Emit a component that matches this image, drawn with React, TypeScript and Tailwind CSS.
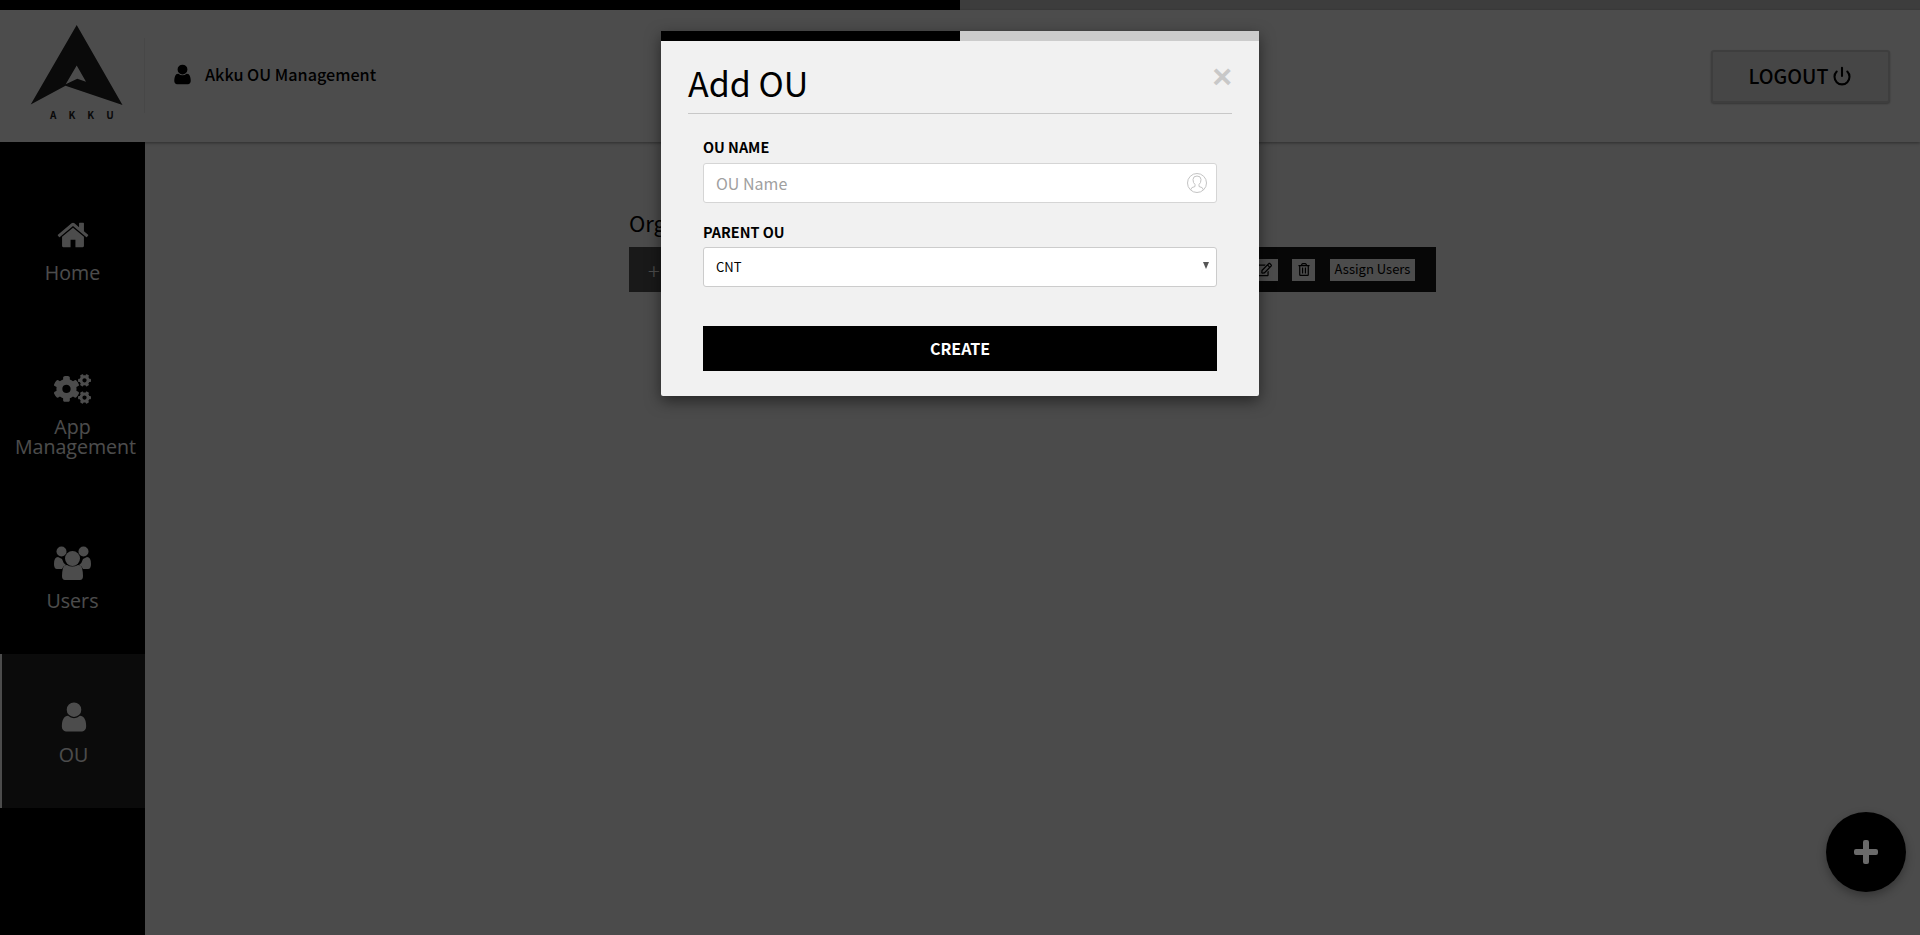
import { FaCogs, FaRegEdit, FaRegTrashAlt } from "react-icons/fa";
import { FiPower } from "react-icons/fi";

const font = { fontFamily: '"Noto Sans CJK SC", "Open Sans", sans-serif' };

const HOME = "M1472 992v480q0 26-19 45t-45 19h-384v-384h-256v384h-384q-26 0-45-19t-19-45v-480q0-1 .5-3t.5-3l575-474 575 474q1 2 1 6zm223-69l-62 74q-8 9-21 11h-3q-13 0-21-7l-692-577-692 577q-12 8-24 7-13-2-21-11l-62-74q-8-10-7-23.5t11-21.5l719-599q32-26 76-26t76 26l244 204v-195q0-14 9-23t23-9h192q14 0 23 9t9 23v408l219 182q10 8 11 21.5t-7 23.5z";
const USER = "M1536 1399q0 109-62.5 187t-150.5 78h-854q-88 0-150.5-78t-62.5-187q0-85 8.5-160.5t31.5-152 58.5-131 94-89 134.5-34.5q131 128 313 128t313-128q76 0 134.5 34.5t94 89 58.5 131 31.5 152 8.5 160.5zm-256-887q0 159-112.5 271.5t-271.5 112.5-271.5-112.5-112.5-271.5 112.5-271.5 271.5-112.5 271.5 112.5 112.5 271.5z";

function Fa4({ d, className }: { d: string; className: string }) {
  return (
    <svg viewBox="0 0 1792 1792" className={className} fill="currentColor">
      <path d={d} />
    </svg>
  );
}

function UsersIcon() {
  return (
    <svg viewBox="0 0 37 34" className="w-[37px] h-[34px]" fill="currentColor">
      <circle cx="7.5" cy="5.5" r="5" />
      <circle cx="29.5" cy="5.5" r="5" />
      <path d="M0 18q0-7 4-7l4 2q1 4 4 6-3 1-4 4H3q-3 0-3-5z" />
      <path d="M37 18q0-7-4-7l-4 2q-1 4-4 6 3 1 4 4h5q3 0 3-5z" />
      <circle cx="18.5" cy="12.5" r="7.5" />
      <path d="M9 22q1-3 4-3 5 3 11 0 3 0 4 3 1 4 1 8 0 4-3 4H11q-3 0-3-4 0-4 1-8z" />
    </svg>
  );
}

function Logo() {
  return (
    <div className="w-[145px] shrink-0 relative h-full">
      <svg viewBox="0 0 145 132" className="w-[145px] h-[132px] text-[#222]" fill="currentColor">
        <path
          fillRule="evenodd"
          d="M76.7 15 122.500 95 65.500 75.800 30.700 94.500ZM76.700 55.500 65.700 74.300 77.300 68.800 86 71.700Z"
        />
      </svg>
      <div className="absolute left-[50px] top-[97px] flex gap-[12px] text-[10px] leading-[16px] font-bold text-[#222]" style={font}>
        <span>A</span>
        <span>K</span>
        <span>K</span>
        <span>U</span>
      </div>
    </div>
  );
}

function NavItem({ icon, label, active, h }: { icon: React.ReactNode; label: React.ReactNode; active?: boolean; h: string }) {
  return (
    <div className={`${h} flex flex-col items-center pt-[44px] text-white ${active ? "bg-[#262626] border-l-2 border-white" : ""}`}>
      <div className="h-[36px] flex items-end justify-center">{icon}</div>
      <div className="mt-[11px] text-center text-[19.600px] leading-[20px]" style={{ fontFamily: '"Open Sans", sans-serif' }}>{label}</div>
    </div>
  );
}

export default function App() {
  return (
    <div className="relative w-full h-[935px] overflow-hidden bg-[#fafafa] flex flex-col" style={font}>
      <div className="h-[10px] flex shrink-0">
        <div className="w-1/2 bg-black" />
        <div className="w-1/2 bg-[#cccccc]" />
      </div>
      <header className="h-[132px] shrink-0 bg-white flex items-center shadow-[0_1px_3px_rgba(0,0,0,0.4)] relative z-10">
        <Logo />
        <div className="w-px h-[75px] bg-[#eeeeee] -ml-px mb-[2px]" />
        <div className="flex items-center ml-[28px] mb-[4px] text-black">
          <Fa4 d={USER} className="w-[23px] h-[23px] -ml-[2px]" />
          <span className="ml-[11px] text-[16.200px] font-medium leading-[24px]">Akku OU Management</span>
        </div>
        <button className="ml-auto mr-[30px] w-[179px] h-[53px] rounded-[3px] border-2 border-[#cfcfcf] bg-[#ececec] shadow-[0_1px_2px_rgba(0,0,0,0.3)] flex items-center justify-center text-black text-[19.600px] font-medium leading-none">
          LOGOUT
          <FiPower className="ml-[4px] w-[20px] h-[20px]" strokeWidth={2.5} />
        </button>
      </header>
      <div className="flex-1 flex min-h-0">
        <aside className="w-[145px] shrink-0 bg-black pt-[30px]">
          <NavItem h="h-[154px]" icon={<Fa4 d={HOME} className="w-[34px] h-[34px]" />} label="Home" />
          <NavItem h="h-[174px]" icon={<FaCogs className="w-[37px] h-[34px]" />} label={<>App<br /><span className="relative left-[3px]">Management</span></>} />
          <NavItem h="h-[154px]" icon={<UsersIcon />} label="Users" />
          <NavItem h="h-[154px]" active icon={<Fa4 d={USER} className="w-[34px] h-[34px]" />} label="OU" />
        </aside>
        <main className="flex-1 pl-[484px] pt-[62px]">
          <div className="w-[807px]">
            <div className="text-[22px] leading-[36px] text-black h-[43px]">Org</div>
            <div className="h-[45px] bg-[#1a1a1a] flex items-center text-white">
              <div className="w-[100px] h-full bg-[#555555] pl-[19px] text-[22px] flex items-center leading-none font-light">+</div>
              <div className="ml-auto flex items-center pr-[21px] text-black">
                <div className="w-[28px] h-[22px] bg-white flex items-center justify-center"><FaRegEdit className="w-[15px] h-[15px]" /></div>
                <div className="ml-[14px] w-[23px] h-[22px] bg-white flex items-center justify-center"><FaRegTrashAlt className="w-[12px] h-[13px]" /></div>
                <div className="ml-[15px] w-[85px] h-[22px] pb-[2px] bg-white flex items-center justify-center text-[13px] leading-none">Assign Users</div>
              </div>
            </div>
          </div>
        </main>
      </div>

      <div className="absolute inset-0 z-20 bg-black/70" />

      <div className="absolute z-30 right-[14px] bottom-[43px] w-[80px] h-[80px] rounded-full bg-black shadow-[0_4px_10px_rgba(0,0,0,0.3)] flex items-center justify-center">
        <svg viewBox="0 0 24 24" className="w-[24px] h-[24px]" fill="#6a6a6a">
          <path d="M9 2q0-2 2-2h2q2 0 2 2v7h7q2 0 2 2v2q0 2-2 2h-7v7q0 2-2 2h-2q-2 0-2-2v-7H2q-2 0-2-2v-2q0-2 2-2h7z" />
        </svg>
      </div>

      <div className="absolute z-30 left-[661px] top-[31px] w-[598px] h-[365px] bg-[#f1f1f1] rounded-[2px] shadow-[0_5px_15px_rgba(0,0,0,0.5)] flex flex-col">
        <div className="h-[10px] flex shrink-0">
          <div className="w-[299px] bg-black" />
          <div className="flex-1 bg-[#cccccc]" />
        </div>
        <div className="relative mx-[27px] h-[73px] border-b border-[#c8c8c8] text-black text-[34px] leading-[50px] pt-[17px]">
          <div className="leading-[50px]">Add OU</div>
          <div
            className="absolute right-[0px] top-[20px] text-[#c8c8c8] text-[34px] font-bold leading-[30px]"
            style={{ fontFamily: '"Liberation Sans", sans-serif' }}
          >
            ×
          </div>
        </div>
        <div className="px-[42px]">
          <label className="block mt-[21px] text-[14.400px] font-bold leading-[24px] text-black">OU NAME</label>
          <div className="relative mt-[4px] h-[40px]">
            <input
              readOnly
              placeholder="OU Name"
              className="w-full h-full bg-white border border-[#d5d5d5] rounded-[3px] pl-[12px] text-[16px] placeholder:text-[#a0a0a0] outline-none"
            />
            <svg viewBox="0 0 22 22" className="absolute right-[9px] top-[9px] w-[22px] h-[22px] text-[#c4c4c4]" fill="none" stroke="currentColor" strokeWidth="1">
              <circle cx="11" cy="11" r="9.500" />
              <path d="M4.500 18q.5-3 4.500-3.500v-2q-2-1.500-2-5 0-3.500 4-3.500t4 3.500q0 3.500-2 5v2q4 .5 4.500 3.500" />
            </svg>
          </div>
          <label className="block mt-[17px] text-[14.400px] font-bold leading-[24px] text-black">PARENT OU</label>
          <div className="relative mt-[3px] h-[40px] bg-white border border-[#cccccc] rounded-[3px] flex items-center pl-[12px] text-[13px] text-black">
            CNT
            <span className="absolute right-[7px] top-[14px] w-0 h-0 border-l-[3.500px] border-r-[3.500px] border-t-[7px] border-l-transparent border-r-transparent border-t-[#555555]" />
          </div>
          <button className="mt-[39px] w-full h-[45px] pb-[1px] bg-black text-white text-[16px] font-bold leading-none">CREATE</button>
        </div>
      </div>
    </div>
  );
}
